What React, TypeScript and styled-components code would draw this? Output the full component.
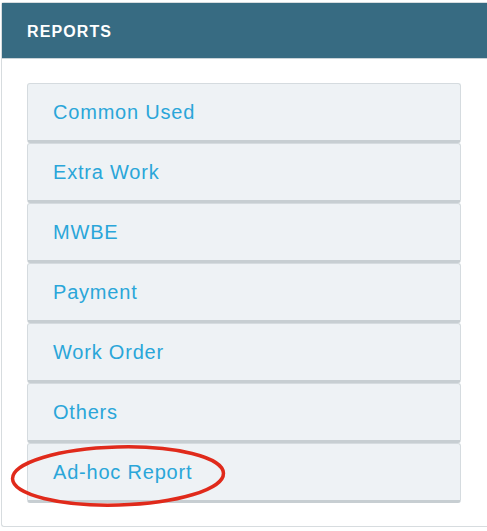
import React from "react";
import styled, { createGlobalStyle } from "styled-components";

const GlobalStyle = createGlobalStyle`
  html, body {
    margin: 0;
    padding: 0;
    background: #ffffff;
  }
  body {
    font-family: "Liberation Sans", Arial, sans-serif;
  }
`;

const Panel = styled.div`
  position: relative;
  margin: 2px 0 0 1px;
  border: 1px solid #d7dcdf;
  border-right: none;
  border-radius: 3px 0 0 3px;
  background: #ffffff;
`;

const PanelHeader = styled.div`
  box-sizing: border-box;
  height: 56px;
  display: flex;
  align-items: center;
  padding: 3px 0 0 25px;
  background: #376b82;
  border-bottom: 1px solid #c9d3d8;
`;

const PanelTitle = styled.h3`
  margin: 0;
  color: #ffffff;
  font-size: 16px;
  font-weight: 700;
  letter-spacing: 1.1px;
`;

const PanelBody = styled.div`
  padding: 24px 0 23px 25px;
  display: flex;
  flex-direction: column;
`;

const ReportItem = styled.a`
  box-sizing: border-box;
  width: 434px;
  height: 60px;
  display: flex;
  align-items: center;
  padding: 1px 0 0 25px;
  background: #eef2f5;
  border: 1px solid #d5dbdf;
  border-bottom: 3px solid #c7ced2;
  border-radius: 3px;
  color: #2aa6d9;
  font-size: 20px;
  letter-spacing: 0.8px;
  text-decoration: none;
  cursor: pointer;
`;

const Highlight = styled.svg`
  position: absolute;
  left: 7px;
  top: 440px;
  pointer-events: none;
`;

const reports = [
  "Common Used",
  "Extra Work",
  "MWBE",
  "Payment",
  "Work Order",
  "Others",
  "Ad-hoc Report",
];

const App: React.FC = () => {
  return (
    <>
      <GlobalStyle />
      <Panel>
        <PanelHeader>
          <PanelTitle>REPORTS</PanelTitle>
        </PanelHeader>
        <PanelBody>
          {reports.map((name) => (
            <ReportItem key={name}>{name}</ReportItem>
          ))}
        </PanelBody>
        <Highlight width="222" height="70" viewBox="0 0 222 70">
          <ellipse
            cx="109"
            cy="33"
            rx="105.5"
            ry="29"
            fill="none"
            stroke="#e02a1b"
            strokeWidth="3.5"
            transform="rotate(-1.5 109 33)"
          />
        </Highlight>
      </Panel>
    </>
  );
};

export default App;
